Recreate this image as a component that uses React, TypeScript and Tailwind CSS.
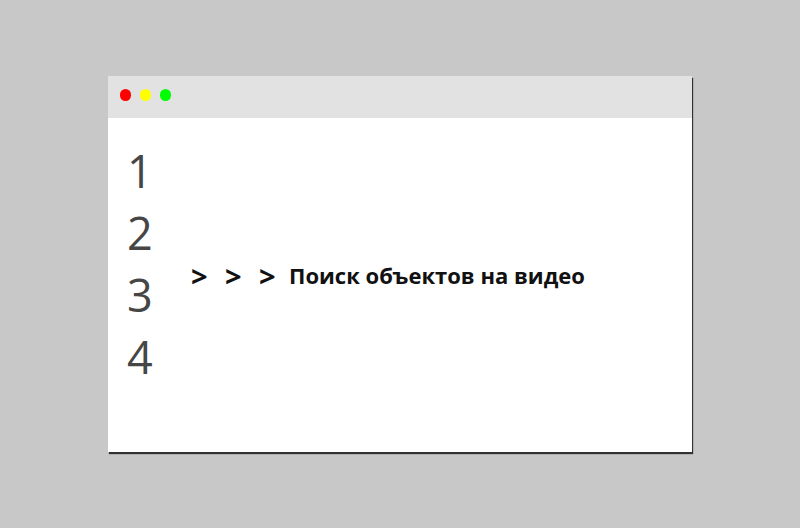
export default function App() {
  return (
    <div className="w-[800px] h-[528px] bg-[#c8c8c8] flex items-start justify-center pt-[76px] font-['Open_Sans',sans-serif]">
      <div className="w-[584px] h-[376px] bg-white flex flex-col shadow-[1px_2px_1px_rgba(0,0,0,0.75)]">
        {/* Title bar */}
        <div className="h-[42px] bg-[#e2e2e2] flex items-center gap-[9px] pl-[12px] pb-[5px]">
          <span className="w-[11px] h-[12px] rounded-full bg-[#ff0000]" />
          <span className="w-[11px] h-[12px] rounded-full bg-[#ffff00]" />
          <span className="w-[11px] h-[12px] rounded-full bg-[#00ff00]" />
        </div>

        {/* Body */}
        <div className="flex items-center pl-[19px] pt-[22px]">
          <div className="flex flex-col w-[28px] text-[45px] leading-[62px] text-[#464646]">
            <span>1</span>
            <span>2</span>
            <span>3</span>
            <span>4</span>
          </div>
          <div className="flex items-center ml-[36px] mt-[22px] font-bold text-[#111111]">
            <span className="w-[34px] text-[29px] leading-none">&gt;</span>
            <span className="w-[34px] text-[29px] leading-none">&gt;</span>
            <span className="w-[30px] text-[29px] leading-none">&gt;</span>
            <span className="text-[22px] leading-none">Поиск объектов на видео</span>
          </div>
        </div>
      </div>
    </div>
  );
}
